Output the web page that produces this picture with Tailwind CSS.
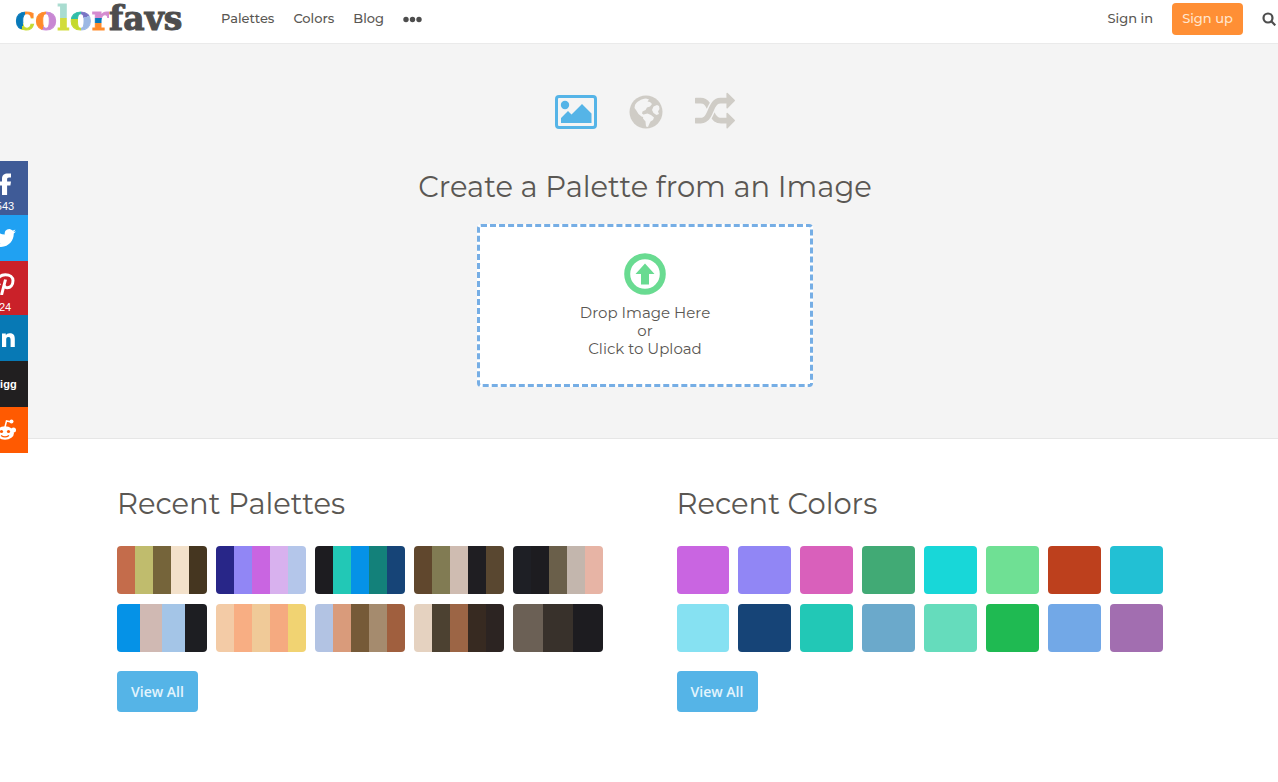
<!DOCTYPE html>
<html lang="en">
<head>
<meta charset="utf-8">
<meta name="viewport" content="width=device-width, initial-scale=1">
<title>colorfavs</title>
<script src="https://cdn.jsdelivr.net/npm/@tailwindcss/browser@4"></script>
</head>
<body class="min-h-screen overflow-x-hidden bg-white font-['Montserrat','Inter',sans-serif] text-[#5a5753]">
<header class="flex h-11 items-start border-b border-[#eaeaea] pl-[15px]">
  <a href="#" aria-label="colorfavs" class="flex h-9 w-[170px] items-center font-['DejaVu_Serif',serif] text-[33px] leading-none font-bold text-[#4d4d4d] [-webkit-text-stroke:1px]"><span class="bg-[conic-gradient(from_90deg,#c5d92d_0_30%,#0879b9_30%_75%,#ff8b2b_75%)] bg-clip-text text-transparent">c</span><span class="bg-[conic-gradient(#c887d3_0_55%,#ff8b2b_55%)] bg-clip-text text-transparent">o</span><span class="bg-linear-to-b from-[#a9dcd0] from-50% to-[#d2dc3c] to-50% bg-clip-text text-transparent">l</span><span class="bg-[conic-gradient(#7774c4_0_20%,#9cb8e4_20%_50%,#c5d92d_50%_75%,#31bda8_75%)] bg-clip-text text-transparent">o</span><span class="bg-[linear-gradient(#d48bd0_50%,#0879b9_50%_65%,#ff8b2b_65%)] bg-clip-text text-transparent">r</span><span>favs</span></a>
  <nav class="ml-9 flex h-9 items-center gap-[19px] pt-px text-[13px] font-medium">
    <a href="#">Palettes</a>
    <a href="#">Colors</a>
    <a href="#">Blog</a>
    <button type="button" aria-label="More" class="flex text-[#4d4d4d]"><svg class="h-5 w-5" viewBox="0 0 20 20" fill="currentColor"><circle cx="3" cy="10.500" r="2.700"/><circle cx="9.500" cy="10.500" r="2.700"/><circle cx="16" cy="10.500" r="2.700"/></svg></button>
  </nav>
  <div class="ml-auto flex h-9 items-center pt-px text-[13px] font-medium">
    <a href="#" class="mr-[19px]">Sign in</a>
    <a href="#" class="mr-[19px] flex h-8 w-[71px] items-center justify-center rounded bg-[#ff8f35] text-[#ffe6cf]">Sign up</a>
    <button type="button" aria-label="Search" class="mr-[2px] text-[#4d4d4d]"><svg class="h-3.5 w-3.5" viewBox="0 0 14 14" fill="none" stroke="currentColor" stroke-width="2.200"><circle cx="6" cy="6" r="4.500"/><path d="M9.300 9.300l4 4"/></svg></button>
  </div>
</header>

<section class="flex flex-col items-center border-b border-[#e6e6e6] bg-[#f4f4f4] pt-12 pb-[51px] pl-3">
  <div class="flex items-center gap-8 text-[#cfccc6]">
    <button type="button" aria-label="Image" class="text-[#55b4e7]"><svg class="h-10 w-[42px]" viewBox="0 0 42 40"><rect x="1.500" y="4.500" width="39" height="31" rx="2.500" fill="none" stroke="currentColor" stroke-width="3"/><circle cx="10" cy="13" r="4.200" fill="currentColor"/><path fill="currentColor" d="M6 31v-5l7-7 3.500 3.500L27 12l9.500 9.500V31z"/></svg></button>
    <button type="button" aria-label="Website"><svg class="h-10 w-[34px]" viewBox="0 0 34 40"><circle cx="17" cy="20" r="16.500" fill="currentColor"/><path fill="#f4f4f4" d="M6 13c2-3.500 6-6 11-6.500l3 1-1.500 2 2.500.5 2 2-2 2.500-3 1-1.500 2.500-3 1.500-.5 2 2 1.500.5 2.500-3-1-3-2.500-2.500-4L5.500 16z"/><path fill="#f4f4f4" d="M14.500 22.500l4-1 3.500 1.500 3 2.500-1 2.500-2.500 1.500-1.500 3-1 2.500-2-.5-.5-5-2.500-3z"/><path fill="#f4f4f4" d="M24.500 14.500l3.500-1.500 2 1 .5 3-1.500 2.500 1 2.500-2.500 1-3-2-1.500-3z"/></svg></button>
    <button type="button" aria-label="Random"><svg class="h-10 w-10" viewBox="0 0 1792 1792" fill="currentColor"><path d="M666 481q-60 92-137 273-22-45-37-72.500t-40.500-63.500-51-56.500-63-35-81.500-14.500h-224q-14 0-23-9t-9-23v-192q0-14 9-23t23-9h224q250 0 410 225zm1126 799q0 14-9 23l-320 320q-9 9-23 9-13 0-22.500-9.500t-9.500-22.500v-192q-32 0-85 .5t-81 1-73-1-71-5-64-10.500-63-18.500-58-28.500-59-40-55-53.500-56-69.500q59-93 136-273 22 45 37 72.500t40.500 63.500 51 56.500 63 35 81.500 14.500h256v-192q0-14 9-23t23-9q12 0 24 10l319 319q9 9 9 23zm0-896q0 14-9 23l-320 320q-9 9-23 9-13 0-22.500-9.500t-9.500-22.500v-192h-256q-48 0-87 15t-69 45-51 61.500-45 77.500q-32 62-78 171-29 66-49.500 111t-54 105-64 100-74 83-90 68.500-106.500 42-128 16.500h-224q-14 0-23-9t-9-23v-192q0-14 9-23t23-9h224q48 0 87-15t69-45 51-61.500 45-77.500q32-62 78-171 29-66 49.500-111t54-105 64-100 74-83 90-68.500 106.500-42 128-16.500h256v-192q0-14 9-23t23-9q12 0 24 10l319 319q9 9 9 23z"/></svg></button>
  </div>
  <h1 class="mt-[35px] text-[29px] leading-10">Create a Palette from an Image</h1>
  <button type="button" class="mt-[17px] flex h-[163px] w-[336px] flex-col items-center rounded border-3 border-dashed border-[#76aee5] bg-white pt-[26px] text-[15px] leading-[18px]">
    <svg class="mb-[9px] h-[42px] w-[42px] text-[#69db91]" viewBox="0 0 42 42"><circle cx="21" cy="21" r="17.800" fill="none" stroke="currentColor" stroke-width="6"/><path fill="currentColor" d="M21 10.500l9.500 10.500h-5.500v10.500h-8V21h-5.500z"/></svg>
    <span>Drop Image Here</span><span>or</span><span>Click to Upload</span>
  </button>
</section>

<main class="grid grid-cols-2 gap-[73px] pt-[45px] pr-[115px] pb-[69px] pl-[117px]">
  <section>
    <h2 class="text-[29px] leading-10">Recent Palettes</h2>
    <div class="mt-[22px] grid grid-cols-5 gap-x-[9px] gap-y-[10px]">
      <a href="#" aria-label="Palette 1" class="flex h-12 overflow-hidden rounded"><i class="flex-1 bg-[#c46c4b]"></i><i class="flex-1 bg-[#c0bc6d]"></i><i class="flex-1 bg-[#75643a]"></i><i class="flex-1 bg-[#f3e1ca]"></i><i class="flex-1 bg-[#453620]"></i></a>
      <a href="#" aria-label="Palette 2" class="flex h-12 overflow-hidden rounded"><i class="flex-1 bg-[#282688]"></i><i class="flex-1 bg-[#9186f5]"></i><i class="flex-1 bg-[#c965e1]"></i><i class="flex-1 bg-[#d8b1ee]"></i><i class="flex-1 bg-[#b4c6ea]"></i></a>
      <a href="#" aria-label="Palette 3" class="flex h-12 overflow-hidden rounded"><i class="flex-1 bg-[#1d1c20]"></i><i class="flex-1 bg-[#22c8b6]"></i><i class="flex-1 bg-[#0592e7]"></i><i class="flex-1 bg-[#13817a]"></i><i class="flex-1 bg-[#164477]"></i></a>
      <a href="#" aria-label="Palette 4" class="flex h-12 overflow-hidden rounded"><i class="flex-1 bg-[#60472d]"></i><i class="flex-1 bg-[#817b53]"></i><i class="flex-1 bg-[#cfbcb1]"></i><i class="flex-1 bg-[#1f1e22]"></i><i class="flex-1 bg-[#594730]"></i></a>
      <a href="#" aria-label="Palette 5" class="flex h-12 overflow-hidden rounded"><i class="flex-1 bg-[#1e1f25]"></i><i class="flex-1 bg-[#1d1c20]"></i><i class="flex-1 bg-[#6a5f4a]"></i><i class="flex-1 bg-[#c3b6ad]"></i><i class="flex-1 bg-[#e7b4a5]"></i></a>
      <a href="#" aria-label="Palette 6" class="flex h-12 overflow-hidden rounded"><i class="flex-1 bg-[#0592e7]"></i><i class="flex-1 bg-[#d0b9b3]"></i><i class="flex-1 bg-[#a4c5e7]"></i><i class="flex-1 bg-[#1d1e22]"></i></a>
      <a href="#" aria-label="Palette 7" class="flex h-12 overflow-hidden rounded"><i class="flex-1 bg-[#f3cba6]"></i><i class="flex-1 bg-[#f8ae83]"></i><i class="flex-1 bg-[#f0ca98]"></i><i class="flex-1 bg-[#f5aa80]"></i><i class="flex-1 bg-[#f1d372]"></i></a>
      <a href="#" aria-label="Palette 8" class="flex h-12 overflow-hidden rounded"><i class="flex-1 bg-[#b2c3e3]"></i><i class="flex-1 bg-[#d99b7b]"></i><i class="flex-1 bg-[#765a38]"></i><i class="flex-1 bg-[#a58b6e]"></i><i class="flex-1 bg-[#a05f3e]"></i></a>
      <a href="#" aria-label="Palette 9" class="flex h-12 overflow-hidden rounded"><i class="flex-1 bg-[#e5d2c0]"></i><i class="flex-1 bg-[#4c4131]"></i><i class="flex-1 bg-[#9c6545]"></i><i class="flex-1 bg-[#372a21]"></i><i class="flex-1 bg-[#2c2422]"></i></a>
      <a href="#" aria-label="Palette 10" class="flex h-12 overflow-hidden rounded"><i class="flex-1 bg-[#6b6055]"></i><i class="flex-1 bg-[#38312b]"></i><i class="flex-1 bg-[#1d1c20]"></i></a>
    </div>
    <a href="#" class="mt-[19px] flex h-[41px] w-[81px] items-center justify-center rounded bg-[#55b4e7] font-['Open_Sans',sans-serif] text-sm font-semibold text-[#e3f4fd]">View All</a>
  </section>
  <section>
    <h2 class="text-[29px] leading-10">Recent Colors</h2>
    <div class="mt-[22px] grid grid-cols-8 gap-x-[9px] gap-y-[10px]">
      <a href="#" aria-label="#c965e1" class="h-12 rounded bg-[#c965e1]"></a>
      <a href="#" aria-label="#9186f5" class="h-12 rounded bg-[#9186f5]"></a>
      <a href="#" aria-label="#d960bb" class="h-12 rounded bg-[#d960bb]"></a>
      <a href="#" aria-label="#41aa75" class="h-12 rounded bg-[#41aa75]"></a>
      <a href="#" aria-label="#18d7d8" class="h-12 rounded bg-[#18d7d8]"></a>
      <a href="#" aria-label="#6fe094" class="h-12 rounded bg-[#6fe094]"></a>
      <a href="#" aria-label="#bd401d" class="h-12 rounded bg-[#bd401d]"></a>
      <a href="#" aria-label="#22c0d4" class="h-12 rounded bg-[#22c0d4]"></a>
      <a href="#" aria-label="#86e1f2" class="h-12 rounded bg-[#86e1f2]"></a>
      <a href="#" aria-label="#164477" class="h-12 rounded bg-[#164477]"></a>
      <a href="#" aria-label="#22c8b6" class="h-12 rounded bg-[#22c8b6]"></a>
      <a href="#" aria-label="#6ba9cb" class="h-12 rounded bg-[#6ba9cb]"></a>
      <a href="#" aria-label="#65dcbc" class="h-12 rounded bg-[#65dcbc]"></a>
      <a href="#" aria-label="#1fba52" class="h-12 rounded bg-[#1fba52]"></a>
      <a href="#" aria-label="#72a8e7" class="h-12 rounded bg-[#72a8e7]"></a>
      <a href="#" aria-label="#a26eb0" class="h-12 rounded bg-[#a26eb0]"></a>
    </div>
    <a href="#" class="mt-[19px] flex h-[41px] w-[81px] items-center justify-center rounded bg-[#55b4e7] font-['Open_Sans',sans-serif] text-sm font-semibold text-[#e3f4fd]">View All</a>
  </section>
</main>

<aside aria-label="Share" class="fixed top-[161px] -left-[18px] flex w-[46px] flex-col font-['Liberation_Sans',sans-serif] text-[11px] leading-3 text-white">
  <a href="#" aria-label="Facebook" class="flex h-[54px] flex-col items-center bg-[#3f5b97] pt-3"><svg class="mb-[5px] h-[22px] w-6" viewBox="0 0 24 22" fill="currentColor"><path d="M9 22V12.500H5.500V8.500H9V6c0-3.800 2.200-5.500 5.800-5.500H18v4h-2c-1.500 0-1.900.8-1.900 2v2H18l-.6 4h-3.300V22z"/></svg><span>543</span></a>
  <a href="#" aria-label="Twitter" class="flex h-[46px] items-center justify-center bg-[#20a1f2]"><svg class="h-[22px] w-[22px]" viewBox="0 0 24 24" fill="currentColor"><path d="M23.950 4.570a10 10 0 0 1-2.820.77 4.960 4.960 0 0 0 2.160-2.720c-.95.55-2 .96-3.130 1.180a4.920 4.920 0 0 0-8.380 4.480C7.690 8.090 4.070 6.130 1.640 3.160a4.900 4.900 0 0 0 1.520 6.570 4.900 4.900 0 0 1-2.230-.61v.06a4.920 4.920 0 0 0 3.950 4.830 5 5 0 0 1-2.210.08 4.940 4.940 0 0 0 4.600 3.420A9.870 9.870 0 0 1 0 19.540a13.990 13.990 0 0 0 7.550 2.210c9.050 0 14-7.500 14-13.980 0-.21 0-.42-.02-.63a9.940 9.940 0 0 0 2.420-2.570z"/></svg></a>
  <a href="#" aria-label="Pinterest" class="flex h-[54px] flex-col items-center bg-[#ca2129] pt-3"><svg class="mb-1.5 h-[22px] w-5" viewBox="0 0 20 22" fill="none" stroke="currentColor" stroke-width="3"><path d="M5 12.500C3.700 11.500 2.500 10 2.500 8.200c0-3.700 3.300-6.500 7.800-6.500 4.700 0 7.700 2.600 7.700 5.900 0 4.300-2.500 7.200-5.700 7.200-1.700 0-2.900-1.200-2.800-2.600M10.500 6.500L6.500 22"/></svg><span>24</span></a>
  <a href="#" aria-label="LinkedIn" class="flex h-[46px] items-center justify-center bg-[#0779b5]"><svg class="h-5 w-5" viewBox="0 0 20 20" fill="currentColor"><circle cx="2.400" cy="2.400" r="2.400"/><path d="M.4 5.500h4V19h-4zM7 5.500h3.800v1.800c.7-1.200 2-2.100 3.900-2.100 4.300 0 5.100 2.600 5.100 6V19h-4.200v-6.500c0-1.500 0-3.400-2.200-3.400S11.200 10.700 11.200 12.400V19H7z"/></svg></a>
  <a href="#" aria-label="Digg" class="flex h-[46px] items-center justify-center bg-[#211f20] text-[11px] font-bold">digg</a>
  <a href="#" aria-label="Reddit" class="flex h-[46px] items-center justify-center bg-[#ff5a01]"><svg class="h-6 w-6" viewBox="0 0 24 24"><path d="M12 9l1.500-6 5 1" fill="none" stroke="#fff" stroke-width="1.500"/><circle cx="18.500" cy="3.500" r="2" fill="#fff"/><circle cx="3.500" cy="12" r="2.500" fill="#fff"/><circle cx="20.500" cy="12" r="2.500" fill="#fff"/><ellipse cx="12" cy="15" rx="9" ry="6.800" fill="#fff"/><circle cx="8.500" cy="13.500" r="1.600" fill="#ff5a01"/><circle cx="15.500" cy="13.500" r="1.600" fill="#ff5a01"/><path d="M8 17.500q4 2.800 8 0" fill="none" stroke="#ff5a01" stroke-width="1.300"/></svg></a>
</aside>
</body>
</html>
